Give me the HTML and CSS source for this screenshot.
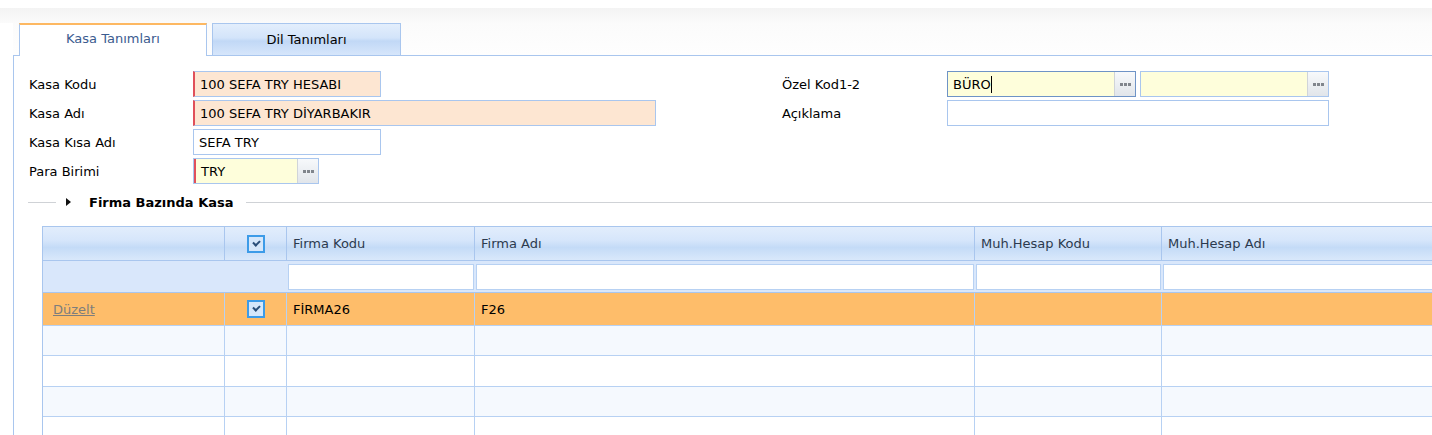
FILE: index.html
```html
<!DOCTYPE html>
<html lang="tr">
<head>
<meta charset="utf-8">
<title>Kasa Tanımları</title>
<link rel="stylesheet" href="styles.css">
</head>
<body>
<div class="page">
  <div class="top-gap"></div>
  <div class="top-band"></div>
  <div class="tabs">
    <div class="tab tab-active">Kasa Tanımları</div>
    <div class="tab tab-inactive">Dil Tanımları</div>
  </div>
  <div class="content">
    <div class="form">
      <div class="col col-left">
        <div class="row">
          <label class="lbl">Kasa Kodu</label>
          <div class="inp inp-req inp-peach w188">100 SEFA TRY HESABI</div>
        </div>
        <div class="row">
          <label class="lbl">Kasa Adı</label>
          <div class="inp inp-req inp-peach w463">100 SEFA TRY DİYARBAKIR</div>
        </div>
        <div class="row">
          <label class="lbl">Kasa Kısa Adı</label>
          <div class="inp w188">SEFA TRY</div>
        </div>
        <div class="row">
          <label class="lbl">Para Birimi</label>
          <div class="combo w125">
            <div class="inp inp-req inp-yellow combo-field">TRY</div>
            <div class="dots"><span></span><span></span><span></span></div>
          </div>
        </div>
      </div>
      <div class="col col-right">
        <div class="row">
          <label class="lbl lbl-r">Özel Kod1-2</label>
          <div class="combo w189 combo-focus">
            <div class="inp inp-yellow combo-field">BÜRO<span class="caret"></span></div>
            <div class="dots"><span></span><span></span><span></span></div>
          </div>
          <div class="combo w189 combo-gap">
            <div class="inp inp-yellow combo-field"></div>
            <div class="dots"><span></span><span></span><span></span></div>
          </div>
        </div>
        <div class="row">
          <label class="lbl lbl-r">Açıklama</label>
          <div class="inp w382"></div>
        </div>
      </div>
    </div>

    <div class="section">
      <span class="sec-line sec-line-short"></span>
      <span class="sec-arrow"></span>
      <span class="sec-title">Firma Bazında Kasa</span>
      <span class="sec-line sec-line-long"></span>
    </div>

    <div class="grid">
      <div class="g-row g-head">
        <div class="c c1"></div>
        <div class="c c2 center"><span class="chk"></span></div>
        <div class="c c3">Firma Kodu</div>
        <div class="c c4">Firma Adı</div>
        <div class="c c5">Muh.Hesap Kodu</div>
        <div class="c c6">Muh.Hesap Adı</div>
      </div>
      <div class="g-row g-filter">
        <div class="c c12"></div>
        <div class="c c3"><div class="f-inp"></div></div>
        <div class="c c4"><div class="f-inp"></div></div>
        <div class="c c5"><div class="f-inp"></div></div>
        <div class="c c6"><div class="f-inp"></div></div>
      </div>
      <div class="g-row g-sel">
        <div class="c c1"><a class="edit">Düzelt</a></div>
        <div class="c c2 center"><span class="chk"></span></div>
        <div class="c c3">FİRMA26</div>
        <div class="c c4">F26</div>
        <div class="c c5"></div>
        <div class="c c6"></div>
      </div>
      <div class="g-row g-alt">
        <div class="c c1"></div><div class="c c2"></div><div class="c c3"></div><div class="c c4"></div><div class="c c5"></div><div class="c c6"></div>
      </div>
      <div class="g-row g-plain">
        <div class="c c1"></div><div class="c c2"></div><div class="c c3"></div><div class="c c4"></div><div class="c c5"></div><div class="c c6"></div>
      </div>
      <div class="g-row g-alt">
        <div class="c c1"></div><div class="c c2"></div><div class="c c3"></div><div class="c c4"></div><div class="c c5"></div><div class="c c6"></div>
      </div>
      <div class="g-row g-plain">
        <div class="c c1"></div><div class="c c2"></div><div class="c c3"></div><div class="c c4"></div><div class="c c5"></div><div class="c c6"></div>
      </div>
    </div>
  </div>
</div>
</body>
</html>
```
FILE: styles.css
```css
html, body {
  margin: 0;
  padding: 0;
  background: #ffffff;
  overflow: hidden;
}
body {
  width: 1432px;
  height: 435px;
  font-family: "DejaVu Sans", Verdana, sans-serif;
  font-size: 13px;
  color: #000;
}
.page {
  width: 1432px;
  height: 435px;
  overflow: hidden;
}
.top-gap {
  height: 8px;
  background: #fff;
}
.top-band {
  height: 15px;
  background: linear-gradient(#f3f3f3, #fbfbfb);
}
.tabs {
  display: flex;
  margin-left: 13px;
  padding-left: 6px;
  gap: 5px;
  height: 32px;
  border-bottom: 1px solid #a9c6ee;
  background: linear-gradient(#fbfbfb, #fefefe);
}
.tab {
  box-sizing: border-box;
  height: 32px;
  display: flex;
  align-items: center;
  justify-content: center;
  font-size: 13px;
}
.tab-active {
  width: 188px;
  background: #fff;
  border-top: 2px solid #fdb862;
  border-left: 1px solid #a9c6ee;
  border-right: 1px solid #a9c6ee;
  height: 33px;
  margin-bottom: -1px;
  color: #3b5b8f;
  padding-bottom: 4px;
}
.tab-inactive {
  width: 189px;
  border: 1px solid #a9c6ee;
  border-bottom: none;
  background: linear-gradient(#e3eefc 0%, #d3e4fa 45%, #c1d8f6 55%, #d6e6fb 100%);
  color: #000;
}
.content {
  margin-left: 13px;
  border-left: 1px solid #a9c6ee;
  padding-left: 15px;
  padding-top: 15px;
  height: 400px;
}
.form {
  display: flex;
}
.col {
  display: flex;
  flex-direction: column;
  gap: 3px;
}
.col-left {
  width: 753px;
}
.row {
  display: flex;
  align-items: center;
  height: 26px;
}
.lbl {
  width: 164px;
  flex: none;
}
.lbl-r {
  width: 165px;
}
.inp {
  box-sizing: border-box;
  height: 26px;
  border: 1px solid #a9c6ee;
  background: #fff;
  padding: 0 5px;
  display: flex;
  align-items: center;
  white-space: nowrap;
  color: #000;
}
.inp-req {
  border-left: 2px solid #e0505a;
  padding-left: 5px;
}
.inp-peach { background: #fde6d2; }
.inp-yellow { background: #fefedb; }
.w188 { width: 188px; }
.w189 { width: 189px; }
.w463 { width: 463px; }
.w382 { width: 382px; }
.w125 { width: 126px; }
.combo {
  box-sizing: border-box;
  display: flex;
  height: 26px;
  border: 1px solid #a9c6ee;
  flex: none;
}
.combo .combo-field {
  flex: 1;
  border: none;
  height: 24px;
}
.combo .combo-field.inp-req {
  border-left: 2px solid #e0505a;
}
.combo-focus {
  border-color: #6e93c6;
}
.combo-gap {
  margin-left: 4px;
}
.dots {
  width: 20px;
  flex: none;
  border-left: 1px solid #d0d4d9;
  background: linear-gradient(#f7f9fb, #e1e5ea);
  display: flex;
  align-items: center;
  justify-content: center;
  gap: 1px;
}
.dots span {
  width: 3px;
  height: 3px;
  background: #80858c;
}
.caret {
  display: inline-block;
  width: 1px;
  height: 17px;
  background: #000;
}
.section {
  display: flex;
  align-items: center;
  margin-top: 9px;
  height: 18px;
}
.sec-line {
  height: 1px;
  background: #cfd2d6;
}
.sec-line-short {
  width: 28px;
  margin-left: -1px;
}
.sec-arrow {
  width: 0;
  height: 0;
  border-top: 4px solid transparent;
  border-bottom: 4px solid transparent;
  border-left: 5px solid #111;
  margin-left: 10px;
  margin-right: 18px;
}
.sec-title {
  font-weight: bold;
  font-size: 13px;
  color: #000;
  margin-right: 12px;
}
.sec-line-long {
  flex: 1;
}
.grid {
  margin-top: 15px;
  margin-left: 13px;
  width: 1500px;
  border-top: 1px solid #a9c6ee;
  border-left: 1px solid #a9c6ee;
}
.g-row {
  display: flex;
  height: 29px;
  border-bottom: 1px solid #b7d1f3;
  background: #fff;
}
.g-alt {
  background: #f5f9fe;
  height: 29px;
}
.g-plain {
  height: 30px;
}
.c {
  box-sizing: border-box;
  border-right: 1px solid #b7d1f3;
  display: flex;
  align-items: center;
  padding-left: 6px;
  flex: none;
  white-space: nowrap;
}
.c1 { width: 182px; }
.c2 { width: 62px; }
.c12 { width: 244px; border-right: none; }
.c3 { width: 188px; }
.c4 { width: 500px; }
.c5 { width: 187px; }
.c6 { width: 400px; }
.center {
  justify-content: center;
  padding-left: 0;
}
.g-head {
  height: 33px;
  background: linear-gradient(#e2edfc 0%, #d6e6fb 40%, #c4dbf7 62%, #d9e8fb 100%);
  border-bottom: 1px solid #a9c6ee;
  color: #2b3a4e;
}
.g-head .c {
  border-right-color: #a9c6ee;
}
.g-filter {
  height: 31px;
  background: #d9e7fb;
  border-bottom: 1px solid #a9c6ee;
}
.g-filter .c {
  border-right: none;
  padding: 0 1px;
}
.f-inp {
  box-sizing: border-box;
  width: 100%;
  height: 26px;
  background: #fff;
  border: 1px solid #b7d1f3;
}
.g-sel {
  height: 32px;
  background: #febd6a;
  color: #000;
}
.edit {
  color: #7d7d7d;
  text-decoration: underline;
  padding-left: 4px;
}
.chk {
  box-sizing: border-box;
  width: 18px;
  height: 18px;
  border: 2px solid #3c9be8;
  background: #d5e7fb;
  position: relative;
  display: inline-block;
}
.chk::after {
  content: "";
  position: absolute;
  left: 4px;
  top: 3px;
  width: 5px;
  height: 3px;
  border-left: 2px solid #2a4f7a;
  border-bottom: 2px solid #2a4f7a;
  transform: rotate(-45deg);
}
```
